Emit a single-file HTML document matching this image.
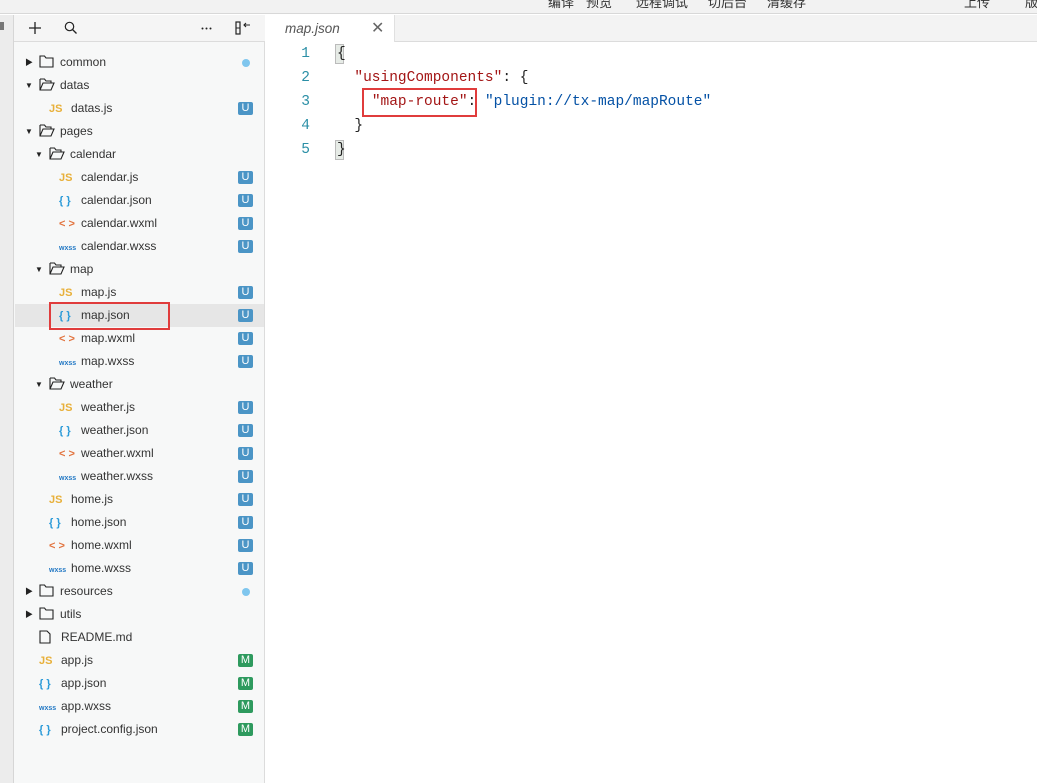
<!DOCTYPE html>
<html><head><meta charset="utf-8"><style>
*{margin:0;padding:0;box-sizing:border-box}
body{width:1037px;height:783px;overflow:hidden;background:#fff;font-family:"Liberation Sans","Noto Sans CJK SC",sans-serif;position:relative}
.a{position:absolute}
.top{left:0;top:0;width:1037px;height:14px;background:#f2f2f2;border-bottom:1px solid #d8d8d8;overflow:hidden}
.top span{position:absolute;top:-8px;font-size:13px;color:#333}
.lc{left:0;top:15px;width:14px;height:768px;background:#ececec;border-right:1px solid #d6d6d6}
.sb{left:14px;top:15px;width:251px;height:768px;background:#f7f8f8;border-right:1px solid #dcdcdc}
.tb{left:14px;top:15px;width:251px;height:27px;border-bottom:1px solid #dcdcdc;background:#f5f5f5}
.row{position:absolute;left:15px;width:249px;height:23px;font-size:12px;color:#333;line-height:23px}
.row span{position:absolute}
.arr{font-size:8px;color:#222}
.js{color:#e8b03a;font-weight:bold;font-size:11px}
.jn{color:#2a9ad8;font-weight:bold;font-size:11px}
.xm{color:#e2733e;font-weight:bold;font-size:11px}
.wx{color:#2278c4;font-weight:bold;font-size:7px}
.b{left:223px;top:5px;width:15px;height:13px;border-radius:2px;color:#fff;font-size:11px;line-height:13px;text-align:center}
.u{background:#4b95c6}.m{background:#2e9a5e}
.dot{left:227px;top:8px;width:8px;height:8px;border-radius:50%;background:#7fc6ee}
.tabs{left:265px;top:15px;width:772px;height:27px;background:#f3f3f3;border-bottom:1px solid #dcdcdc}
.tab{left:265px;top:15px;width:130px;height:27px;background:#fff;border-right:1px solid #e0e0e0}
.code{font-family:"Liberation Mono","DejaVu Sans Mono",monospace;font-size:14.5px;position:absolute;line-height:24px;white-space:pre}
.ln{color:#2b8fa6;left:290px;width:20px;text-align:right}
.k{color:#a31515}.s{color:#0451a5}
</style></head><body>
<div class="a top"><span style="left:548px">编译</span><span style="left:586px">预览</span><span style="left:636px">远程调试</span><span style="left:708px">切后台</span><span style="left:767px">清缓存</span><span style="left:964px">上传</span><span style="left:1025px">版</span></div>
<div class="a lc"><div class="a" style="left:0;top:7px;width:4px;height:8px;background:#777"></div></div>
<div class="a sb"></div>
<div class="a tb">
<svg class="a" style="left:14px;top:6px" width="14" height="14"><path d="M7 1v12M1 7h12" stroke="#222" stroke-width="1.3"/></svg>
<svg class="a" style="left:50px;top:6px" width="14" height="14"><circle cx="5.5" cy="5.5" r="4.2" fill="none" stroke="#222" stroke-width="1.2"/><path d="M8.5 8.5l4 4" stroke="#222" stroke-width="1.3"/></svg>
<svg class="a" style="left:187px;top:12px" width="12" height="3"><circle cx="1.5" cy="1.5" r="1" fill="#222"/><circle cx="5.5" cy="1.5" r="1" fill="#222"/><circle cx="9.5" cy="1.5" r="1" fill="#222"/></svg>
<svg class="a" style="left:221px;top:6px" width="16" height="14"><rect x="1" y="1" width="4" height="12" fill="none" stroke="#222" stroke-width="1.2"/><path d="M1 7h4M15 4H9M11 2L9 4l2 2" stroke="#222" stroke-width="1.1" fill="none"/></svg>
</div>
<div class="a" style="left:15px;top:304px;width:249px;height:23px;background:#e6e6e6"></div>
<div class="a" style="left:49px;top:302px;width:121px;height:28px;border:2px solid #e03c3c"></div>

<div id="tree"></div>
<script>
var F='<svg width="15" height="13" viewBox="0 0 15 13"><path d="M1 1h4.5l1.5 2h7v9H1z" fill="none" stroke="#222" stroke-width="1.1"/></svg>';
var FO='<svg width="16" height="13" viewBox="0 0 16 13"><path d="M1 1h4.5l1.5 2h5v2M1 1v11h11l3-7H4l-3 7" fill="none" stroke="#222" stroke-width="1.1"/></svg>';
var D='<svg width="12" height="14" viewBox="0 0 12 14"><path d="M1 1h7l3 3v9H1z" fill="none" stroke="#222" stroke-width="1.1"/></svg>';
var ic={js:'<b class="js">JS</b>',jn:'<b class="jn">{ }</b>',xm:'<b class="xm">&lt; &gt;</b>',wx:'<b class="wx">wxss</b>'};
var rows=[
['f0c','common',62,'dot'],['f0o','datas',85],['js','datas.js',108,'u',1],['f0o','pages',131],['f1o','calendar',154],
['js','calendar.js',177,'u',2],['jn','calendar.json',200,'u',2],['xm','calendar.wxml',223,'u',2],['wx','calendar.wxss',246,'u',2],
['f1o','map',269],['js','map.js',292,'u',2],['jn','map.json',315,'u',2],['xm','map.wxml',338,'u',2],['wx','map.wxss',361,'u',2],
['f1o','weather',384],['js','weather.js',407,'u',2],['jn','weather.json',430,'u',2],['xm','weather.wxml',453,'u',2],['wx','weather.wxss',476,'u',2],
['js','home.js',499,'u',1],['jn','home.json',522,'u',1],['xm','home.wxml',545,'u',1],['wx','home.wxss',568,'u',1],
['f0c','resources',591,'dot'],['f0c','utils',614],['md','README.md',637,null,0],
['js','app.js',660,'m',0],['jn','app.json',683,'m',0],['wx','app.wxss',706,'m',0],['jn','project.config.json',729,'m',0]];
var h='';
rows.forEach(function(r){
 var t=r[2]-11,s='<div class="row" style="top:'+t+'px">';
 if(r[0][0]=='f'){var lv=+r[0][1],o=r[0][2]=='o',base=lv*10;
  s+='<span class="arr" style="left:'+(10+base)+'px;top:0">'+(o?'▼':'▶')+'</span>';
  s+='<span style="left:'+(24+base)+'px;top:4px;line-height:0">'+(o?FO:F)+'</span>';
  s+='<span style="left:'+(45+base)+'px">'+r[1]+'</span>';
 } else {var lv=r[4],x=[24,34,44][lv];
  s+='<span style="left:'+x+'px;top:'+(r[0]=='md'?4:0)+'px;'+(r[0]=='md'?'line-height:0':'')+'">'+(r[0]=='md'?D:ic[r[0]])+'</span>';
  s+='<span style="left:'+(x+22)+'px">'+r[1]+'</span>';
 }
 if(r[3]=='dot')s+='<span class="dot"></span>';
 else if(r[3])s+='<span class="b '+r[3]+'">'+r[3].toUpperCase()+'</span>';
 h+=s+'</div>';});
document.getElementById('tree').innerHTML=h;
</script>

<div class="a tabs"></div>
<div class="a tab"><span class="a" style="left:20px;top:6px;font-size:13.5px;font-style:italic;color:#555">map.json</span><span class="a" style="left:106px;top:3px;font-size:16px;color:#666">✕</span></div>

<div class="code ln" style="top:42px">1
2
3
4
5</div>
<div class="a" style="left:335px;top:44px;width:9px;height:20px;background:#e6ebe6;border:1px solid #bbb"></div>
<div class="a" style="left:335px;top:140px;width:9px;height:20px;background:#e6ebe6;border:1px solid #bbb"></div>
<div class="a" style="left:362px;top:92px;width:1px;height:20px;background:#ddd"></div>
<div class="code" style="left:337px;top:42px;color:#222">{
  <span class="k">"usingComponents"</span>: {
    <span class="k">"map-route"</span>: <span class="s">"plugin://tx-map/mapRoute"</span>
  }
}</div>
<div class="a" style="left:362px;top:88px;width:115px;height:29px;border:2px solid #e03c3c"></div>
</body></html>
